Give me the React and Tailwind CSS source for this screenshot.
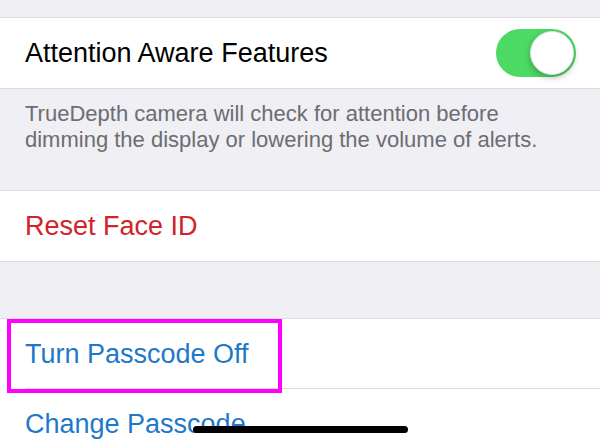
import React from 'react';

const FONT = { fontFamily: '"Liberation Sans", Arial, sans-serif' };

function Toggle({ on = true }) {
  return (
    <div className={`w-[80px] h-[48px] rounded-full p-[2px] flex ${on ? 'bg-[#4cd964] justify-end' : 'bg-[#e5e5ea] justify-start'}`}>
      <div className="w-[44px] h-[44px] rounded-full bg-white shadow-[0_3px_6px_rgba(0,0,0,0.25)] border border-[#e2e2e2]" />
    </div>
  );
}

function Row({ children, right, color = 'text-black', inset = false }) {
  return (
    <div className="relative h-[70px] bg-white flex items-center justify-between pl-[25px] pr-[24px]">
      <span className={`text-[27px] ${color}`}>{children}</span>
      {right}
      {inset && <div className="absolute left-[25px] right-0 bottom-0 h-px bg-[#dcdce0]" />}
    </div>
  );
}

export default function App() {
  return (
    <div className="relative w-[600px] h-[446px] overflow-hidden bg-[#efeff4]" style={FONT}>
      <div className="h-[17px]" />

      {/* Attention group */}
      <div className="border-y border-[#dcdce0]">
        <Row right={<Toggle />}>Attention Aware Features</Row>
      </div>
      <p className="pt-[12px] pb-[37px] px-[25px] text-[22px] leading-[26px] text-[#6d6d72]">
        TrueDepth camera will check for attention before dimming the display or lowering the volume of alerts.
      </p>

      {/* Face ID */}
      <div className="border-y border-[#dcdce0]">
        <Row color="text-[#d2232a]">Reset Face ID</Row>
      </div>

      <div className="h-[56px]" />

      {/* Passcode */}
      <div className="border-t border-[#dcdce0]">
        <Row color="text-[#1f78c8]" inset>Turn Passcode Off</Row>
        <Row color="text-[#1f78c8]">Change Passcode</Row>
      </div>

      {/* annotation box */}
      <div className="absolute left-[7px] top-[319px] w-[275px] h-[74px] border-[4px] border-[#ff00ff]" />

      {/* home indicator */}
      <div className="absolute left-[193px] top-[426px] w-[215px] h-[7px] rounded-full bg-black" />
    </div>
  );
}
